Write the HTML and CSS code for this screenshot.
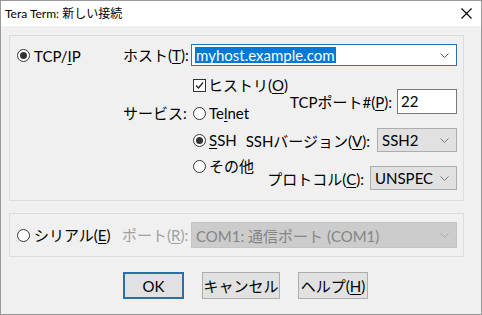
FILE: index.html
```html
<!DOCTYPE html>
<html lang="ja">
<head>
    <meta charset="UTF-8">
    <title>Tera Term: 新しい接続</title>
    <link rel="stylesheet" href="styles.css">
</head>
<body>
    <div class="window">
        <div class="titlebar">
            <span class="title">Tera Term: 新しい接続</span>
            <svg class="close" width="11" height="11" viewBox="0 0 11 11">
                <path d="M0.5 0.5 L10.5 10.5 M10.5 0.5 L0.5 10.5" stroke="#000" stroke-width="1.1" fill="none"/>
            </svg>
        </div>

        <div class="content">
            <!-- TCP/IP -->
            <div class="group group-tcp">
                <label class="radio tcp-radio"><span class="dot checked"></span>TCP/<u>I</u>P</label>
                <span class="label">ホスト(<u>T</u>):</span>
                <div class="combo focused">
                    <span class="selected">myhost.example.com</span>
                    <svg class="chevron" width="9" height="5" viewBox="0 0 9 5"><path d="M0.5 0.5 L4.5 4.5 L8.5 0.5" stroke="#555" fill="none"/></svg>
                </div>

                <span class="label svc-label">サービス:</span>
                <div class="row-two">
                    <div class="stack">
                        <label class="check"><span class="box">
                            <svg width="11" height="11" viewBox="0 0 11 11"><path d="M2 5.5 L4.5 8 L9 2.5" stroke="#222" stroke-width="1.2" fill="none"/></svg>
                        </span>ヒストリ(<u>O</u>)</label>
                        <label class="radio"><span class="dot"></span>Te<u>l</u>net</label>
                    </div>
                    <div class="port">
                        <span>TCPポート#(<u>P</u>):</span>
                        <div class="textbox">22</div>
                    </div>
                </div>

                <div class="row-ssh">
                    <label class="radio"><span class="dot checked"></span><u>S</u>SH</label>
                    <div class="right">
                        <span>SSHバージョン(<u>V</u>):</span>
                        <div class="select ssh-select">SSH2
                            <svg class="chevron" width="9" height="5" viewBox="0 0 9 5"><path d="M0.5 0.5 L4.5 4.5 L8.5 0.5" stroke="#777" fill="none"/></svg>
                        </div>
                    </div>
                </div>

                <div class="row-other">
                    <label class="radio other-radio"><span class="dot"></span>その他</label>
                    <div class="right proto">
                        <span>プロトコル(<u>C</u>):</span>
                        <div class="select proto-select">UNSPEC
                            <svg class="chevron" width="9" height="5" viewBox="0 0 9 5"><path d="M0.5 0.5 L4.5 4.5 L8.5 0.5" stroke="#777" fill="none"/></svg>
                        </div>
                    </div>
                </div>
            </div>

            <!-- シリアル -->
            <div class="group group-serial">
                <label class="radio serial-radio"><span class="dot"></span>シリアル(<u>E</u>)</label>
                <span class="label disabled port-label">ポート(<u>R</u>):</span>
                <div class="combo disabled-combo">
                    <span>COM1: 通信ポート (COM1)</span>
                    <svg class="chevron" width="9" height="5" viewBox="0 0 9 5"><path d="M0.5 0.5 L4.5 4.5 L8.5 0.5" stroke="#a8a8a8" fill="none"/></svg>
                </div>
            </div>

            <div class="buttons">
                <button class="btn btn-ok">OK</button>
                <button class="btn btn-cancel">キャンセル</button>
                <button class="btn btn-help">ヘルプ(<u>H</u>)</button>
            </div>
        </div>
    </div>
</body>
</html>
```

FILE: styles.css
```css
/* Общие стили */
* {
    box-sizing: border-box;
}

body {
    margin: 0;
    font-family: Lato, "Noto Sans CJK JP", sans-serif;
    font-size: 15px;
    color: #000;
}

u {
    text-decoration: underline;
    text-decoration-thickness: 1px;
    text-underline-offset: 2px;
}

.window {
    width: 482px;
    height: 315px;
    border: 1px solid #9a9a9a;
    background-color: #f0f0f0;
    display: flex;
    flex-direction: column;
}

/* Заголовок окна */
.titlebar {
    height: 25px;
    background-color: #fff;
    display: flex;
    align-items: center;
    justify-content: space-between;
    padding: 0 9px 0 4px;
    flex-shrink: 0;
}

.title {
    font-size: 12px;
    line-height: 16px;
}

.content {
    padding: 9px 17px 0 8px;
}

/* Группы */
.group {
    border: 1px solid #dcdcdc;
}

.group-tcp {
    height: 166px;
    padding: 8px 5px 0 7px;
    display: grid;
    grid-template-columns: 106px 68px 266px;
    grid-template-rows: 22px 62px 24px 38px;
}

.group-serial {
    margin-top: 12px;
    height: 44px;
    padding-left: 7px;
    display: flex;
    align-items: center;
}

.label {
    line-height: 20px;
    white-space: nowrap;
    align-self: center;
}

.svc-label {
    grid-column: 2;
    grid-row: 2;
    align-self: end;
    margin-bottom: 5px;
}

.disabled {
    color: #a0a0a0;
}

.port-label {
    width: 69px;
}

/* Радиокнопки и флажок */
.radio,
.check {
    display: flex;
    align-items: center;
    line-height: 20px;
    white-space: nowrap;
}

.dot {
    width: 13px;
    height: 13px;
    border: 1px solid #333;
    border-radius: 50%;
    background-color: #fff;
    margin-right: 3px;
    display: flex;
    align-items: center;
    justify-content: center;
    flex-shrink: 0;
}

.dot.checked::after {
    content: "";
    width: 7px;
    height: 7px;
    border-radius: 50%;
    background-color: #333;
}

.tcp-radio {
    align-self: center;
    grid-row: 1;
    grid-column: 1;
    margin-top: 1px;
}

.tcp-radio .dot,
.serial-radio .dot {
    margin-right: 4px;
}

.serial-radio {
    width: 105px;
}

.box {
    width: 13px;
    height: 13px;
    border: 1px solid #333;
    background-color: #fff;
    margin-right: 2px;
    display: flex;
}

/* Поля */
.combo {
    position: relative;
    height: 22px;
    background-color: #fff;
    border: 1px solid #2b73b4;
    display: flex;
    align-items: center;
    padding-left: 3px;
}

.combo.focused {
    grid-column: 3;
    grid-row: 1;
}

.selected {
    background-color: #0078d7;
    color: #fff;
    line-height: 16px;
    padding: 0 1px;
}

.chevron {
    position: absolute;
    right: 7px;
    top: 50%;
    margin-top: -2px;
}

.disabled-combo {
    width: 266px;
    height: 26px;
    background-color: #cccccc;
    border-color: #c4c4c4;
    color: #858585;
    padding-left: 4px;
}

.row-two {
    grid-column: 3;
    grid-row: 2;
    display: flex;
    justify-content: space-between;
}

.stack {
    display: flex;
    flex-direction: column;
    gap: 8px;
    padding: 9px 0 0 2px;
}

.port {
    margin-top: 23px;
    display: flex;
    align-items: center;
    gap: 5px;
    height: 25px;
    white-space: nowrap;
}

.textbox {
    width: 60px;
    height: 25px;
    background-color: #fff;
    border: 1px solid #7a7a7a;
    padding-left: 3px;
    line-height: 22px;
}

.row-ssh,
.row-other {
    grid-column: 3;
    display: flex;
    justify-content: space-between;
    padding-left: 2px;
    min-width: 0;
}

.row-ssh {
    grid-row: 3;
    align-items: center;
}

.row-other {
    grid-row: 4;
    align-items: flex-start;
}

.other-radio {
    margin-top: 4px;
}

.right {
    display: flex;
    align-items: center;
    gap: 7px;
    white-space: nowrap;
}

.proto {
    margin-top: 14px;
    gap: 6px;
}

.select {
    position: relative;
    height: 24px;
    background-color: #e1e1e1;
    border: 1px solid #adadad;
    padding-left: 4px;
    line-height: 22px;
    flex-shrink: 0;
}

.ssh-select {
    width: 80px;
}

.proto-select {
    width: 87px;
}

/* Кнопки */
.buttons {
    display: flex;
    margin-top: 15px;
    padding-left: 114px;
}

.btn {
    font-family: inherit;
    font-size: 15px;
    height: 27px;
    background-color: #e1e1e1;
    border: 1px solid #adadad;
    padding: 0;
    color: #000;
    line-height: 24px;
}

.btn-ok {
    width: 61px;
    border: 2px solid #2a6fa8;
}

.btn-cancel {
    width: 78px;
    margin-left: 18px;
}

.btn-help {
    width: 70px;
    margin-left: 18px;
}
```
